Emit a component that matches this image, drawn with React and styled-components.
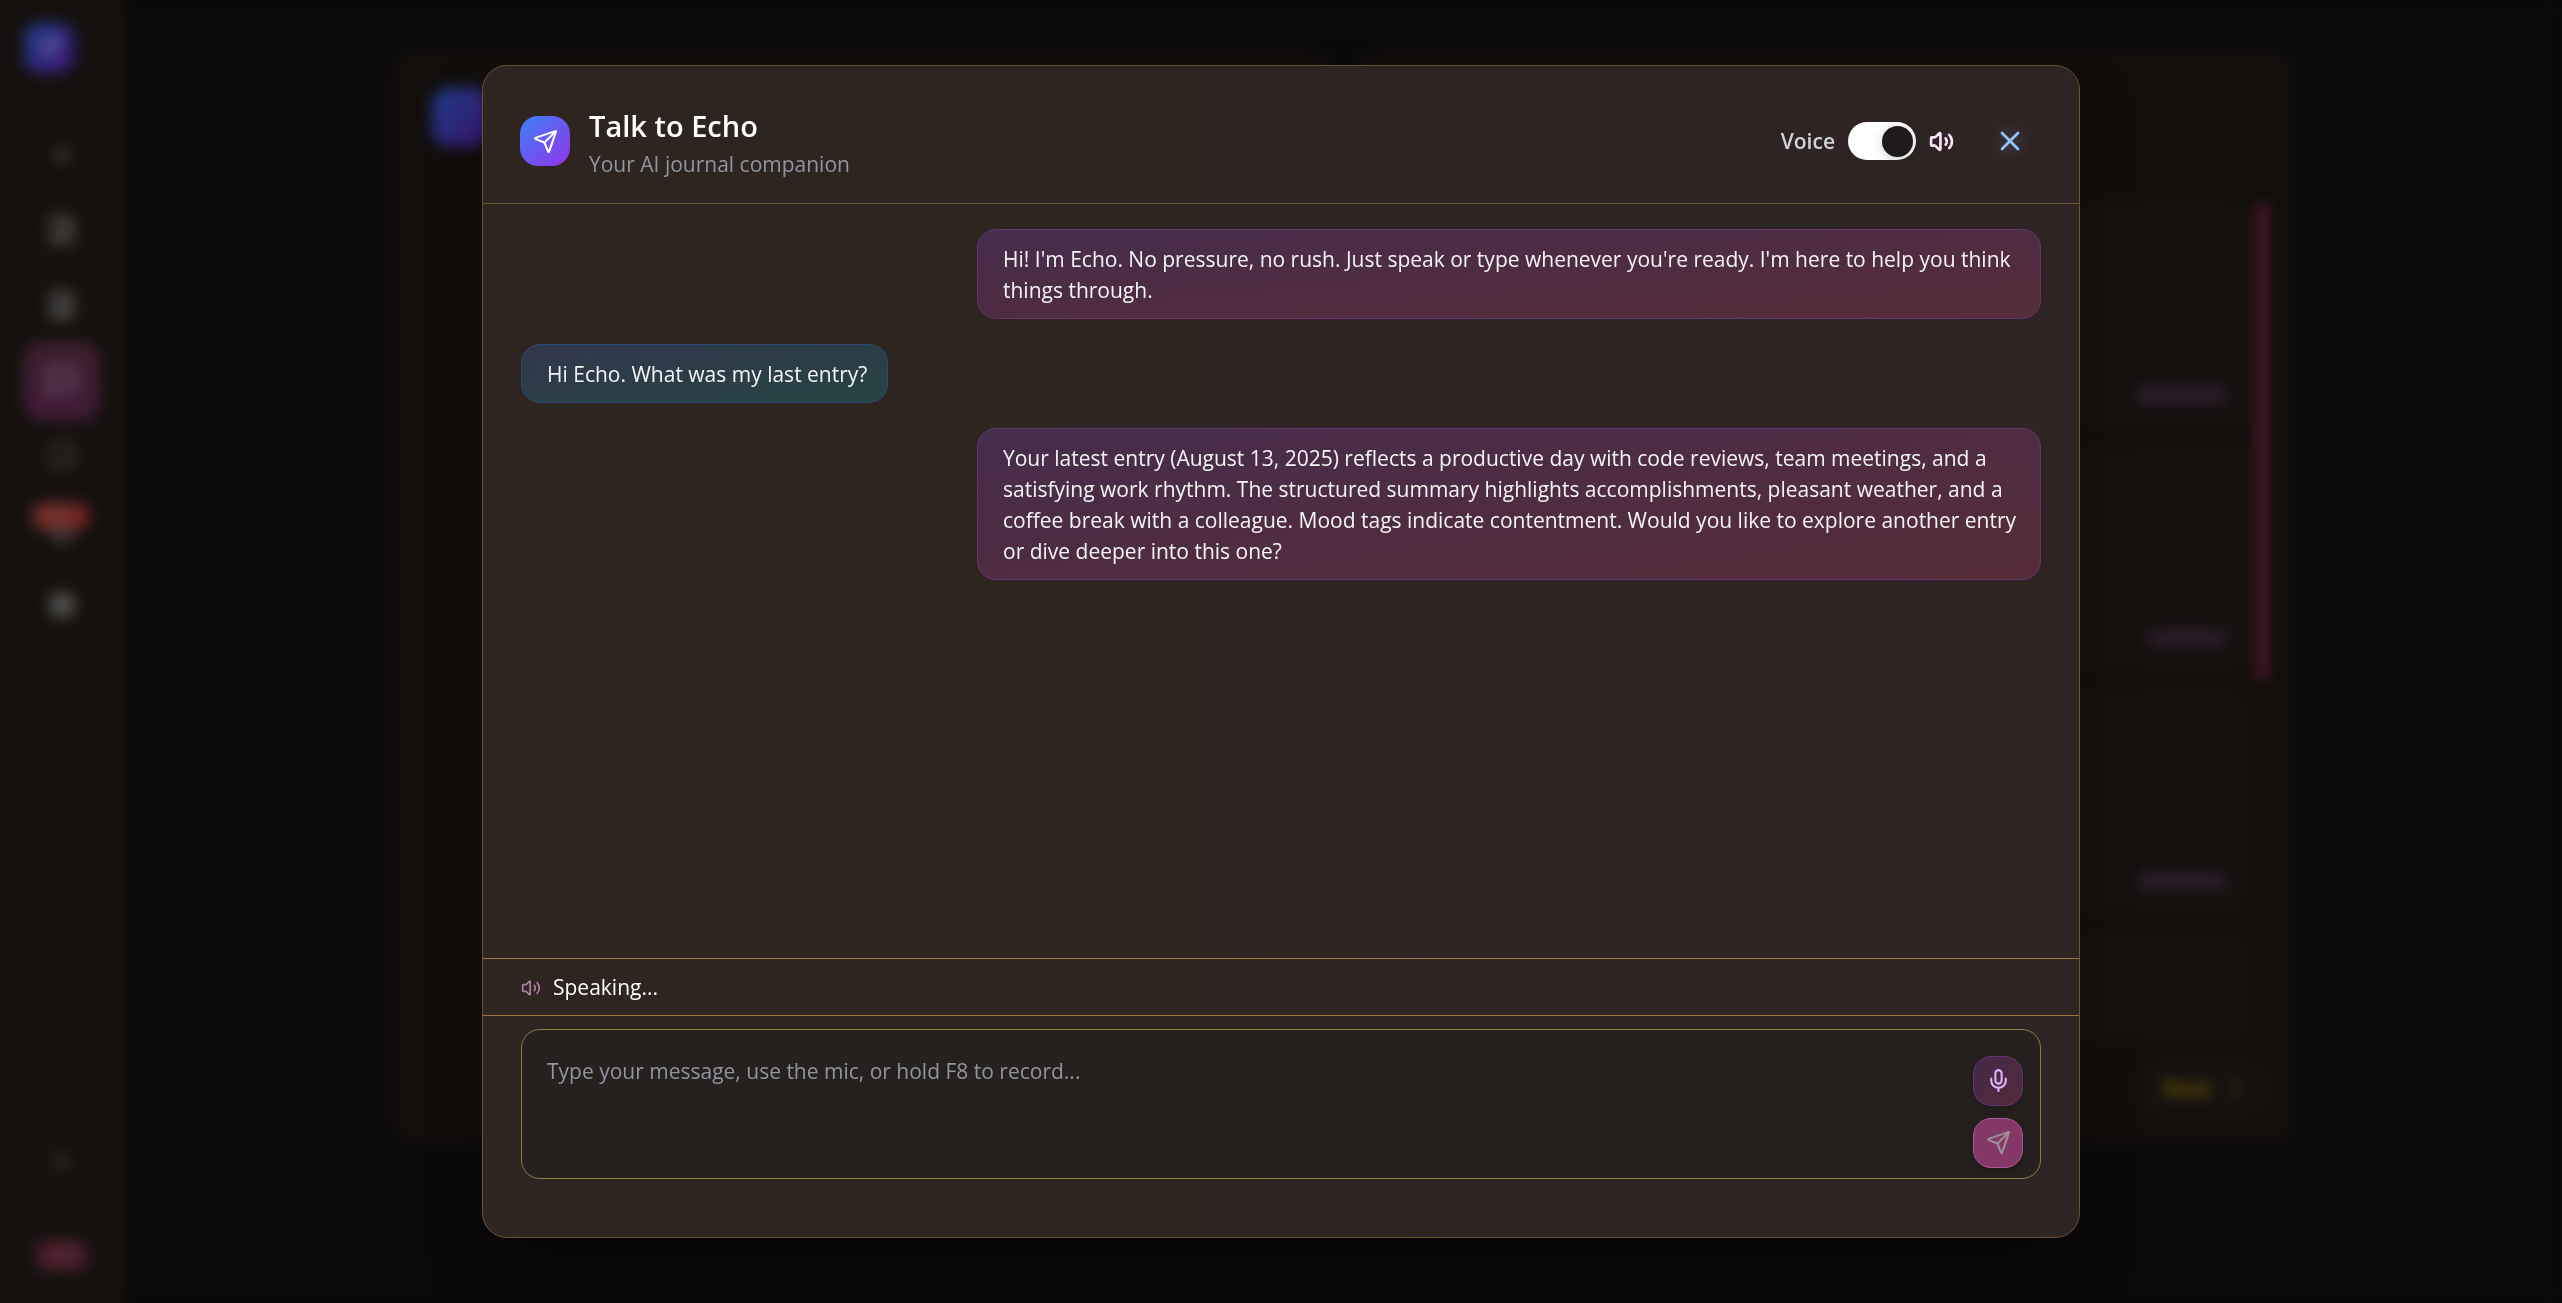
import React, { useState } from 'react';
import styled, { createGlobalStyle, css } from 'styled-components';
import {
  Send,
  Volume2,
  X,
  Mic,
  Plus,
  FilePen,
  FileText,
  MessageSquare,
  Circle,
  Bell,
  Settings,
  ChevronRight,
} from 'lucide-react';

const GlobalStyle = createGlobalStyle`
  *, *::before, *::after { box-sizing: border-box; }
  html, body, #root { height: 100%; }
  body {
    margin: 0;
    background: #0b090a;
    color: #f5f5f5;
    font-family: "Segoe UI", "Open Sans", "Noto Sans", sans-serif;
    font-size: 21px;
    line-height: 31px;
    overflow: hidden;
  }
  button, textarea, input { font: inherit; margin: 0; }
`;

/* ---------- page behind the dialog ---------- */

const Page = styled.div`
  display: grid;
  grid-template-columns: 125px 1fr;
  height: 100vh;
`;

const Sidebar = styled.nav`
  display: flex;
  flex-direction: column;
  padding: 23px 24px;
  background: #15110f;
  border-right: 2px solid #17130f;
`;

const gradientTile = css`
  background: linear-gradient(135deg, #1c3f86, #3e1376);
  border-radius: 16px;
`;

const Logo = styled.div`
  ${gradientTile}
  display: grid;
  place-items: center;
  width: ${(p) => p.$size}px;
  height: ${(p) => p.$size}px;
  color: #7a76a0;
`;

const NavList = styled.div`
  display: flex;
  flex-direction: column;
  flex: 1;
  margin-top: 44px;
`;

const NavItem = styled.div`
  position: relative;
  display: grid;
  place-items: center;
  height: 75px;
  border-radius: 18px;
  color: ${(p) => (p.$active ? '#6e5a76' : p.$dim ? '#464240' : '#595957')};
  background: ${(p) => (p.$active ? 'linear-gradient(#3d1f2e, #401c38)' : 'transparent')};
  box-shadow: ${(p) => (p.$active ? '0 4px 4px #3a1a32' : 'none')};
`;

const Badge = styled.span`
  position: absolute;
  top: 11px;
  left: 8px;
  width: 58px;
  height: 27px;
  border-radius: 14px;
  background: linear-gradient(90deg, #742722, #743430, #6e1c18);
`;

const NavPill = styled.div`
  align-self: center;
  width: 54px;
  height: 29px;
  margin: 43px 0 10px;
  border-radius: 12px;
  background: linear-gradient(90deg, #3f1732, #54252c, #3f1732);
`;

const Main = styled.main`
  display: grid;
  grid-template-columns: 1fr 1fr;
  gap: 20px;
  width: 100%;
  max-width: 1907px;
  height: 1093px;
  margin: 50px auto 0;
`;

const Panel = styled.section`
  display: flex;
  flex-direction: column;
  padding: 37px 37px 24px 41px;
  border: 1px solid #14110c;
  border-radius: 25px;
  background: #110e0c;
`;

const Scroller = styled.div`
  display: flex;
  justify-content: space-between;
  gap: 10px;
  height: 838px;
  margin: 115px -9px 0 0;
`;

const Cards = styled.div`
  display: flex;
  flex-direction: column;
  flex: 1;
  gap: 18px;
  overflow: hidden;
`;

const Card = styled.div`
  display: flex;
  flex: none;
  align-items: flex-end;
  justify-content: flex-end;
  height: 225px;
  padding: 26px 20px;
  border: 1px solid #1c170f;
  border-radius: 18px;
  background: #15110f;
`;

const CountBar = styled.div`
  width: ${(p) => p.$width}px;
  height: 12px;
  border-radius: 4px;
  background: #352037;
`;

const Thumb = styled.div`
  width: 12px;
  height: 476px;
  border-radius: 4px;
  background: #4c1828;
`;

const Pager = styled.div`
  display: flex;
  align-items: center;
  align-self: flex-end;
  gap: 14px;
  height: 62px;
  margin: 16px -12px 0 0;
  padding: 0 24px;
  border-radius: 18px;
  background: #15110f;
  color: #7a5e04;
  font-weight: 600;
`;

/* ---------- dialog ---------- */

const Overlay = styled.div`
  position: fixed;
  inset: 0;
  display: flex;
  align-items: center;
  justify-content: center;
  padding: 0 40px;
  backdrop-filter: blur(7px);
`;

const Dialog = styled.section`
  display: flex;
  flex-direction: column;
  width: 100%;
  max-width: 1598px;
  height: 90vh;
  border: 1px solid #6b5330;
  border-radius: 25px;
  background: linear-gradient(90deg, #2e2521 45%, #2e2423 60%);
  box-shadow: 0 32px 64px -16px rgba(0, 0, 0, 0.5);
`;

const Header = styled.header`
  display: flex;
  align-items: center;
  justify-content: space-between;
  padding: 37px 39px 24px 37px;
  border-bottom: 1px solid #6b5330;
`;

const Brand = styled.div`
  display: flex;
  align-items: center;
  gap: 19px;
`;

const BrandIcon = styled.div`
  display: grid;
  place-items: center;
  width: 50px;
  height: 50px;
  border-radius: 18px;
  background: linear-gradient(135deg, #3b82f6, #9333ea);
  color: #fff;
`;

const Title = styled.h2`
  margin: 0;
  font-size: 29px;
  font-weight: 600;
  line-height: 46px;
  color: #fff;
`;

const Subtitle = styled.p`
  margin: 0;
  line-height: 30px;
  color: #8f95a1;
`;

const Controls = styled.div`
  display: flex;
  align-items: center;
  gap: 13px;
`;

const VoiceLabel = styled.label`
  font-weight: 600;
  color: #d1d3d8;
`;

const Switch = styled.input`
  display: flex;
  align-items: center;
  appearance: none;
  width: 68px;
  height: 38px;
  padding: 0 3px;
  border-radius: 19px;
  background: #fff;
  cursor: pointer;

  &::before {
    content: '';
    width: 31px;
    height: 31px;
    margin-left: ${(p) => (p.checked ? 'auto' : '0')};
    border-radius: 50%;
    background: #1f1b1a;
    box-shadow: 0 2px 12px rgba(0, 0, 0, 0.2);
  }
`;

const VolumeIcon = styled(Volume2)`
  color: #ffe4fa;
`;

const CloseButton = styled.button`
  display: grid;
  place-items: center;
  width: 60px;
  height: 60px;
  margin-left: 13px;
  padding: 0;
  border: 0;
  background: none;
  color: #93c5fd;
  cursor: pointer;

  svg { filter: drop-shadow(0 0 8px rgba(147, 197, 253, 0.4)); }
`;

const Messages = styled.div`
  display: flex;
  flex: 1;
  flex-direction: column;
  align-items: flex-start;
  gap: 25px;
  min-height: 0;
  padding: 25px 38px;
`;

const Bubble = styled.p`
  max-width: 70%;
  margin: 0;
  padding: 14px 20px 12px 25px;
  border: 1px solid ${(p) => (p.$echo ? '#66356f' : '#2d4a75')};
  border-radius: 19px;
  align-self: ${(p) => (p.$echo ? 'flex-end' : 'flex-start')};
  background: ${(p) =>
    p.$echo
      ? 'linear-gradient(to bottom right, #462d4d, #562c37)'
      : 'linear-gradient(to bottom right, #31384d, #264343)'};
`;

const Status = styled.div`
  display: flex;
  align-items: center;
  gap: 12px;
  height: 58px;
  padding: 2px 38px 0;
  border-top: 1px solid #997743;
  border-bottom: 1px solid #997743;
  color: #fff;

  svg { color: #b07fa9; }
`;

const Composer = styled.form`
  padding: 13px 38px 58px;
`;

const Field = styled.div`
  display: flex;
  gap: 20px;
  padding: 26px 17px 10px 25px;
  border: 1px solid #997743;
  border-radius: 19px;
  background: #26201e;
`;

const MessageInput = styled.textarea`
  flex: 1;
  padding: 0;
  border: 0;
  outline: 0;
  resize: none;
  background: transparent;
  color: #f5f5f5;

  &::placeholder { color: #8f95a1; opacity: 1; }
`;

const Actions = styled.div`
  display: flex;
  flex-direction: column;
  gap: 12px;
`;

const ActionButton = styled.button`
  display: grid;
  place-items: center;
  width: 50px;
  height: 50px;
  padding: 0;
  border-radius: 18px;
  border: 1px solid ${(p) => (p.$send ? '#a85a98' : '#623470')};
  background: ${(p) => (p.$send ? '#843868' : 'linear-gradient(135deg, #432a4a, #532a38)')};
  color: ${(p) => (p.$send ? '#a08f9a' : '#d8b4fe')};
  box-shadow: 0 4px 12px rgba(0, 0, 0, 0.2);
  cursor: pointer;
`;

const MESSAGES = [
  {
    echo: true,
    text: "Hi! I'm Echo. No pressure, no rush. Just speak or type whenever you're ready. I'm here to help you think things through.",
  },
  { echo: false, text: 'Hi Echo. What was my last entry?' },
  {
    echo: true,
    text: 'Your latest entry (August 13, 2025) reflects a productive day with code reviews, team meetings, and a satisfying work rhythm. The structured summary highlights accomplishments, pleasant weather, and a coffee break with a colleague. Mood tags indicate contentment. Would you like to explore another entry or dive deeper into this one?',
  },
];

function JournalPage() {
  return (
    <Page aria-hidden="true">
      <Sidebar>
        <Logo $size={50}><Send size={24} /></Logo>
        <NavList>
          <NavItem><Plus size={20} strokeWidth={4} /></NavItem>
          <NavItem><FilePen size={30} strokeWidth={3} /></NavItem>
          <NavItem><FileText size={30} strokeWidth={3} /></NavItem>
          <NavItem $active><MessageSquare size={30} strokeWidth={3} /></NavItem>
          <NavItem $dim><Circle size={28} strokeWidth={3} /></NavItem>
          <NavItem><Bell size={28} strokeWidth={3} /><Badge /></NavItem>
          <NavItem><Settings size={28} strokeWidth={4} /></NavItem>
        </NavList>
        <NavItem $dim><ChevronRight size={24} strokeWidth={4} /></NavItem>
        <NavPill />
      </Sidebar>
      <Main>
        <Panel><Logo $size={58} /></Panel>
        <Panel>
          <Scroller>
            <Cards>
              <Card><CountBar $width={88} /></Card>
              <Card><CountBar $width={76} /></Card>
              <Card><CountBar $width={86} /></Card>
              <Card />
            </Cards>
            <Thumb />
          </Scroller>
          <Pager>Next <ChevronRight size={22} /></Pager>
        </Panel>
      </Main>
    </Page>
  );
}

export default function App() {
  const [voice, setVoice] = useState(true);
  const [draft, setDraft] = useState('');

  return (
    <>
      <GlobalStyle />
      <JournalPage />
      <Overlay>
        <Dialog role="dialog" aria-labelledby="echo-title">
          <Header>
            <Brand>
              <BrandIcon><Send size={25} /></BrandIcon>
              <div>
                <Title id="echo-title">Talk to Echo</Title>
                <Subtitle>Your AI journal companion</Subtitle>
              </div>
            </Brand>
            <Controls>
              <VoiceLabel htmlFor="voice">Voice</VoiceLabel>
              <Switch
                id="voice"
                type="checkbox"
                role="switch"
                checked={voice}
                onChange={(e) => setVoice(e.target.checked)}
              />
              <VolumeIcon size={25} strokeWidth={2.5} />
              <CloseButton type="button" aria-label="Close"><X size={32} strokeWidth={2} /></CloseButton>
            </Controls>
          </Header>
          <Messages>
            {MESSAGES.map((m) => (
              <Bubble key={m.text} $echo={m.echo}>{m.text}</Bubble>
            ))}
          </Messages>
          <Status role="status"><Volume2 size={20} />Speaking...</Status>
          <Composer onSubmit={(e) => e.preventDefault()}>
            <Field>
              <MessageInput
                aria-label="Message"
                placeholder="Type your message, use the mic, or hold F8 to record..."
                value={draft}
                onChange={(e) => setDraft(e.target.value)}
              />
              <Actions>
                <ActionButton type="button" aria-label="Record"><Mic size={25} /></ActionButton>
                <ActionButton type="submit" aria-label="Send" $send><Send size={25} /></ActionButton>
              </Actions>
            </Field>
          </Composer>
        </Dialog>
      </Overlay>
    </>
  );
}
